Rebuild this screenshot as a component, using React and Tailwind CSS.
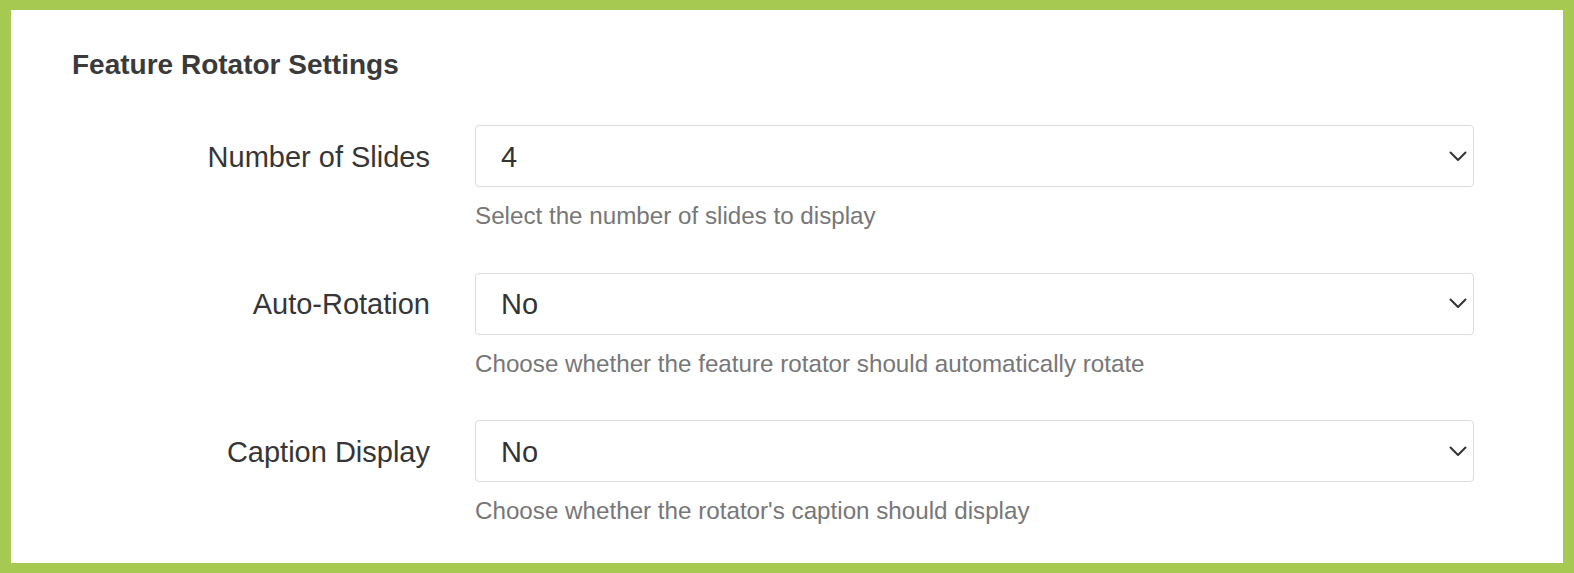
import React from "react";

const rows = [
  { label: "Number of Slides", value: "4", help: "Select the number of slides to display" },
  { label: "Auto-Rotation", value: "No", help: "Choose whether the feature rotator should automatically rotate" },
  { label: "Caption Display", value: "No", help: "Choose whether the rotator's caption should display" },
];

function Chevron() {
  return (
    <svg width="18" height="11" viewBox="0 0 18 11" className="shrink-0">
      <path d="M1.5 1.5 L9 9 L16.5 1.5" fill="none" stroke="#333" strokeWidth="2" strokeLinecap="round" strokeLinejoin="round" />
    </svg>
  );
}

export default function App() {
  return (
    <div
      className="w-[1574px] h-[573px] bg-white border-x-[11px] border-y-[10px] border-[#a6c952] box-border"
      style={{ fontFamily: '"Liberation Sans", Arial, Helvetica, sans-serif' }}
    >
      <div className="pl-[61px] pr-[89px] pt-[38px]">
        <h2 className="text-[28px] leading-[34px] font-bold text-[#3a3a3a] m-0">Feature Rotator Settings</h2>
        <div className="mt-[43px] flex flex-col">
          {rows.map((r, i) => (
            <div key={i} className={`flex ${i > 0 ? "mt-[42.5px]" : ""}`}>
              <div className="w-[358px] h-[62px] flex items-center justify-end text-[29px] text-[#363636] shrink-0 pt-[3px]">
                {r.label}
              </div>
              <div className="ml-[45px] flex-1 flex flex-col">
                <div className="h-[62px] border border-[#dcdcdc] rounded-[4px] flex items-center justify-between pl-[25px] pr-[6px]">
                  <span className="text-[29px] text-[#333] pt-[3px]">{r.value}</span>
                  <Chevron />
                </div>
                <div className="mt-[15px] text-[24.2px] leading-[28px] text-[#777]">{r.help}</div>
              </div>
            </div>
          ))}
        </div>
      </div>
    </div>
  );
}
